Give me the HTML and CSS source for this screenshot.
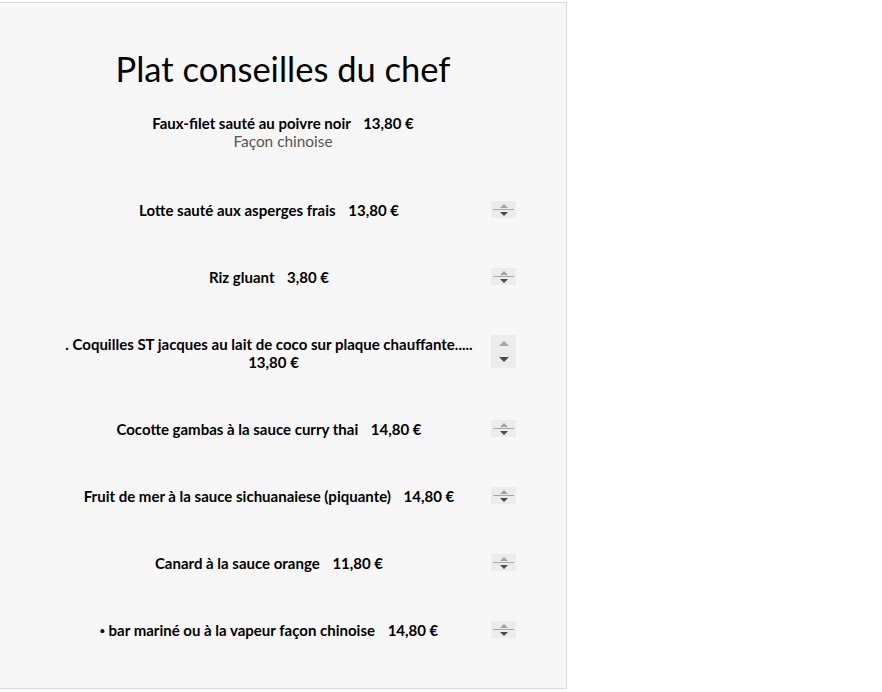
FILE: index.html
```html
<!DOCTYPE html>
<html lang="fr">
<head>
    <meta charset="UTF-8">
    <meta name="viewport" content="width=device-width, initial-scale=1.0">
    <title>Plat conseilles du chef</title>
    <link rel="stylesheet" href="styles.css">
</head>
<body>

<div class="panel">
    <h1>Plat conseilles du chef</h1>

    <div class="featured">
        <div class="featured-name">Faux-filet sauté au poivre noir <span class="price">13,80 €</span></div>
        <div class="featured-note">Façon chinoise</div>
    </div>

    <div class="dish-list">
        <div class="dish">
            <div class="dish-text">Lotte sauté aux asperges frais <span class="price">13,80 €</span></div>
            <div class="spin"><i class="up"></i><b class="sep"></b><i class="down"></i></div>
        </div>
        <div class="dish">
            <div class="dish-text">Riz gluant <span class="price">3,80 €</span></div>
            <div class="spin"><i class="up"></i><b class="sep"></b><i class="down"></i></div>
        </div>
        <div class="dish">
            <div class="dish-text">. Coquilles ST jacques au lait de coco sur plaque chauffante..... <span class="price">13,80 €</span></div>
            <div class="spin tall"><i class="up"></i><i class="down"></i></div>
        </div>
        <div class="dish">
            <div class="dish-text">Cocotte gambas à la sauce curry thai <span class="price">14,80 €</span></div>
            <div class="spin"><i class="up"></i><b class="sep"></b><i class="down"></i></div>
        </div>
        <div class="dish">
            <div class="dish-text">Fruit de mer à la sauce sichuanaiese (piquante) <span class="price">14,80 €</span></div>
            <div class="spin"><i class="up"></i><b class="sep"></b><i class="down"></i></div>
        </div>
        <div class="dish">
            <div class="dish-text">Canard à la sauce orange <span class="price">11,80 €</span></div>
            <div class="spin"><i class="up"></i><b class="sep"></b><i class="down"></i></div>
        </div>
        <div class="dish">
            <div class="dish-text"><span class="bullet">•</span> bar mariné ou à la vapeur façon chinoise <span class="price">14,80 €</span></div>
            <div class="spin"><i class="up"></i><b class="sep"></b><i class="down"></i></div>
        </div>
    </div>
</div>

</body>
</html>
```

FILE: styles.css
```css
body {
    margin: 0;
    background-color: #fff;
    font-family: Lato, "Noto Sans", sans-serif;
    color: #000;
}

.panel {
    margin: 2px 0 0 -1px;
    width: 566px;
    height: 685px;
    border: 1px solid #d9d9d9;
    background-color: #f7f7f7;
}

h1 {
    margin: 44px 0 0;
    font-size: 34.5px;
    font-weight: 400;
    line-height: 44px;
    text-align: center;
}

.featured {
    margin-top: 23px;
    text-align: center;
    font-size: 15px;
    line-height: 18px;
}

.featured-name {
    font-weight: 700;
}

.featured-note {
    color: #555;
    font-size: 15.4px;
}

.price {
    margin-left: 9px;
}

.dish-list {
    display: flex;
    flex-direction: column;
    gap: 49px;
    margin-top: 51px;
}

.dish {
    display: flex;
    margin-left: 49px;
}

.dish-text {
    width: 440px;
    text-align: center;
    font-size: 15px;
    font-weight: 700;
    line-height: 18px;
}

.bullet {
    font-size: 9px;
    vertical-align: 2px;
}

/* number spinner */
.spin {
    display: flex;
    flex-direction: column;
    align-items: center;
    justify-content: center;
    width: 25px;
    height: 17px;
    margin: 0 0 0 2px;
    background-color: #ececec;
}

.spin.tall {
    height: 33px;
    justify-content: space-around;
}

.spin .up,
.spin .down {
    width: 0;
    height: 0;
    border-left: 4.5px solid transparent;
    border-right: 4.5px solid transparent;
}

.spin .up {
    border-bottom: 4px solid #a3a3a3;
}

.spin .down {
    border-top: 4px solid #4a4a4a;
}

.spin .sep {
    width: 21px;
    height: 1px;
    margin: 1px 0 2px;
    background-color: #a8a8a8;
}

.spin.tall .up {
    border-left-width: 5.5px;
    border-right-width: 5.5px;
    border-bottom-width: 5px;
}

.spin.tall .down {
    border-left-width: 5.5px;
    border-right-width: 5.5px;
    border-top-width: 5px;
}
```
